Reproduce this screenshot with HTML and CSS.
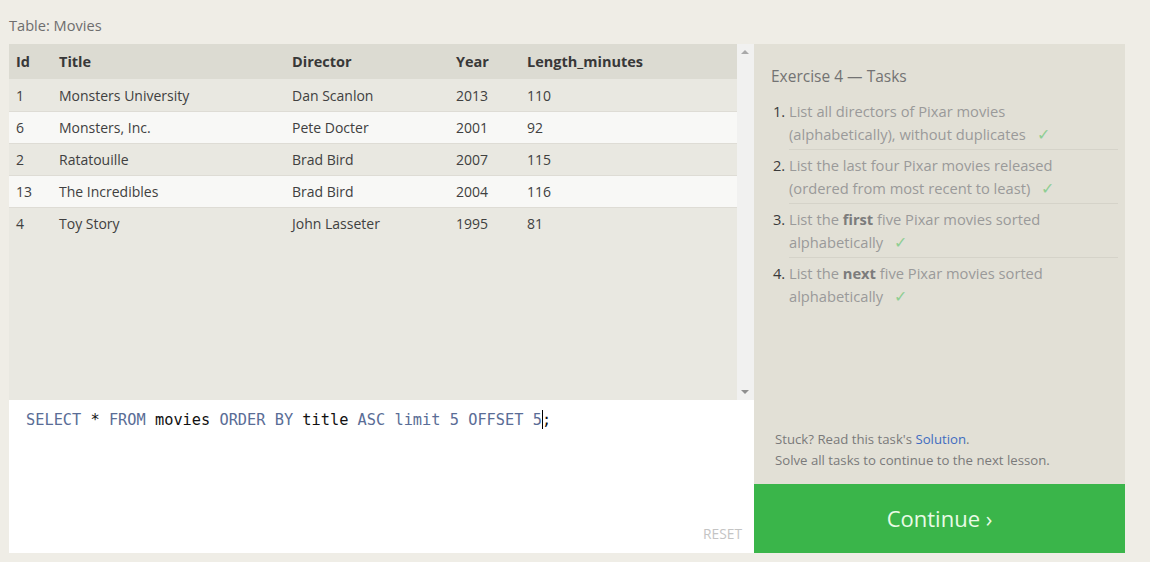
FILE: index.html
```html
<!DOCTYPE html>
<html>
<head>
<meta charset="utf-8">
<link rel="stylesheet" href="styles.css">
</head>
<body>
<div class="page">
  <div class="caption">Table: Movies</div>
  <div class="main">
    <div class="left">
      <div class="table-area">
        <div class="table-scroll">
          <table class="movies">
            <thead>
              <tr><th class="c-id">Id</th><th class="c-title">Title</th><th class="c-dir">Director</th><th class="c-year">Year</th><th>Length_minutes</th></tr>
            </thead>
            <tbody>
              <tr class="odd"><td>1</td><td>Monsters University</td><td>Dan Scanlon</td><td>2013</td><td>110</td></tr>
              <tr class="even"><td>6</td><td>Monsters, Inc.</td><td>Pete Docter</td><td>2001</td><td>92</td></tr>
              <tr class="odd"><td>2</td><td>Ratatouille</td><td>Brad Bird</td><td>2007</td><td>115</td></tr>
              <tr class="even"><td>13</td><td>The Incredibles</td><td>Brad Bird</td><td>2004</td><td>116</td></tr>
              <tr class="odd"><td>4</td><td>Toy Story</td><td>John Lasseter</td><td>1995</td><td>81</td></tr>
            </tbody>
          </table>
        </div>
        <div class="scrollbar">
          <span class="arrow up"></span>
          <span class="arrow down"></span>
        </div>
      </div>
      <div class="editor">
        <div class="code"><span class="kw">SELECT</span> * <span class="kw">FROM</span> movies <span class="kw">ORDER BY</span> title <span class="kw">ASC</span> <span class="kw">limit</span> <span class="num">5</span> <span class="kw">OFFSET</span> <span class="num">5</span><span class="cursor"></span>;</div>
        <div class="reset">RESET</div>
      </div>
    </div>
    <div class="right">
      <div class="tasks">
        <div class="tasks-title">Exercise 4 — Tasks</div>
        <ol class="task-list">
          <li><span class="t">List all directors of Pixar movies (alphabetically), without duplicates <span class="check">✓</span></span></li>
          <li><span class="t">List the last four Pixar movies released (ordered from most recent to least) <span class="check">✓</span></span></li>
          <li><span class="t">List the <b>first</b> five Pixar movies sorted alphabetically <span class="check">✓</span></span></li>
          <li><span class="t">List the <b>next</b> five Pixar movies sorted alphabetically <span class="check">✓</span></span></li>
        </ol>
        <div class="help">
          <div>Stuck? Read this task's <a class="link">Solution</a>.</div>
          <div>Solve all tasks to continue to the next lesson.</div>
        </div>
      </div>
      <div class="continue">Continue ›</div>
    </div>
  </div>
</div>
</body>
</html>
```
FILE: styles.css
```css
html, body {
  margin: 0;
  padding: 0;
}
body {
  background: #efede6;
  font-family: "Open Sans", "Liberation Sans", sans-serif;
  color: #333;
}
.page {
  padding: 14px 0 0 9px;
  width: 1116px;
}
.caption {
  font-size: 14.6px;
  color: #6e6e6e;
  height: 30px;
  line-height: 22px;
}
.main {
  display: flex;
  height: 509px;
}
.left {
  width: 745px;
  display: flex;
  flex-direction: column;
}
.table-area {
  height: 356px;
  display: flex;
  background: #e9e8e1;
}
.table-scroll {
  flex: 1;
}
.movies {
  width: 100%;
  border-collapse: collapse;
  font-size: 14px;
}
.movies th {
  background: #dcdbd2;
  text-align: left;
  font-weight: 700;
  height: 35px;
  padding: 0;
  color: #383838;
  font-size: 14.5px;
}
.movies td {
  height: 31px;
  padding: 0;
  border-top: 1px solid #dedcd5;
  color: #404040;
}
.movies tr:first-child td {
  border-top: none;
  height: 32px;
}
.movies th:first-child, .movies td:first-child {
  padding-left: 7px;
}
.c-id { width: 43px; }
.c-title { width: 233px; }
.c-dir { width: 164px; }
.c-year { width: 71px; }
.odd td { background: #e9e8e1; }
.even td { background: #f8f8f6; }
.scrollbar {
  width: 17px;
  background: #f1f1f0;
  position: relative;
}
.arrow {
  position: absolute;
  left: 4px;
  width: 0;
  height: 0;
  border-left: 4px solid transparent;
  border-right: 4px solid transparent;
}
.arrow.up {
  top: 6px;
  border-bottom: 4px solid #a9a9a9;
}
.arrow.down {
  bottom: 6px;
  border-top: 4px solid #8f8f8f;
}
.editor {
  flex: 1;
  background: #ffffff;
  position: relative;
}
.code {
  font-family: "DejaVu Sans Mono", "Liberation Mono", monospace;
  font-size: 15.3px;
  padding: 10px 0 0 17px;
  line-height: 20px;
  color: #111;
}
.kw, .num { color: #5a6d96; }
.cursor {
  display: inline-block;
  width: 1px;
  height: 19px;
  background: #000;
  vertical-align: -4px;
  margin-right: -1px;
}
.reset {
  position: absolute;
  right: 12px;
  bottom: 10px;
  font-size: 13.8px;
  color: #c4c4c4;
}
.right {
  width: 371px;
  display: flex;
  flex-direction: column;
}
.tasks {
  flex: 1;
  background: #e2e0d6;
  padding: 21px 7px 0 17px;
  display: flex;
  flex-direction: column;
}
.tasks-title {
  font-size: 15.5px;
  color: #737373;
  line-height: 22px;
  margin-bottom: 13px;
}
.task-list {
  margin: 0;
  padding: 0 0 0 18px;
  font-size: 14.7px;
  line-height: 22.5px;
  color: #3a3a3a;
}
.task-list li {
  padding: 0 40px 4px 0;
  border-bottom: 1px solid #d5d3c9;
  margin-bottom: 4px;
}
.task-list li:last-child {
  border-bottom: none;
}
.task-list .t {
  color: #9a9a9a;
}
.task-list b {
  color: #7c7c7c;
  font-weight: 700;
}
.check {
  color: #8fce93;
  margin-left: 7px;
  font-size: 16px;
}
.help {
  margin-top: auto;
  padding: 0 0 13px 4px;
  font-size: 13.2px;
  line-height: 21px;
  color: #7a7a7a;
}
.link {
  color: #3f6cc0;
}
.continue {
  height: 69px;
  box-sizing: border-box;
  padding-bottom: 2px;
  background: #3ab54a;
  color: #e9fbe6;
  font-size: 22px;
  display: flex;
  align-items: center;
  justify-content: center;
}
```
